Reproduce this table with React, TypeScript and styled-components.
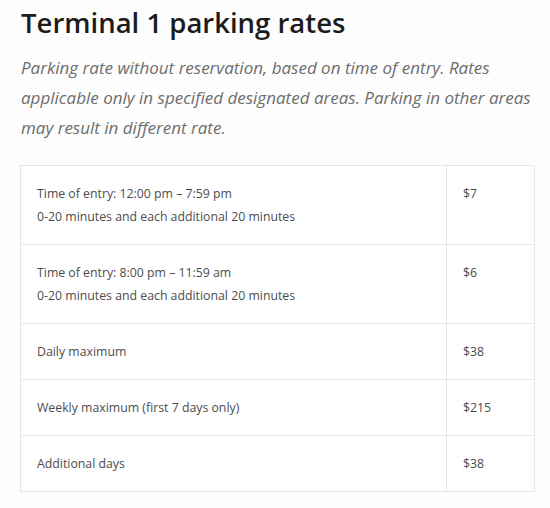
import React from "react";
import styled, { createGlobalStyle } from "styled-components";

const Global = createGlobalStyle`
  html, body { margin: 0; padding: 0; background: #fdfdfd; }
  body { font-family: "Open Sans", "Noto Sans", sans-serif; }
`;

const Page = styled.div`
  padding: 5px 15px 0 20px;
`;

const Title = styled.h1`
  margin: 0;
  font-family: "Open Sans", sans-serif;
  font-weight: 600;
  font-size: 27.5px;
  line-height: 36px;
  color: #1c1c1c;
  padding-left: 1px;
`;

const Lead = styled.p`
  margin: 12px 0 0;
  padding-left: 1px;
  font-family: "Open Sans", sans-serif;
  font-style: italic;
  font-size: 17px;
  line-height: 30px;
  color: #6d6d6d;
`;

const Table = styled.table`
  margin-top: 22px;
  width: 100%;
  border-collapse: collapse;
  background: #fff;
  border: 1px solid #e6e6e6;
`;

const Row = styled.tr`
  border-bottom: 1px solid #e6e6e6;
`;

const Cell = styled.td<{ $price?: boolean }>`
  padding: 16px;
  vertical-align: top;
  font-family: "Open Sans", sans-serif;
  font-size: 12.3px;
  line-height: 23px;
  color: #4d4d4d;
  width: ${(p) => (p.$price ? "55px" : "auto")};
  border-left: ${(p) => (p.$price ? "1px solid #e6e6e6" : "none")};
`;

const Line = styled.div``;

const rates: { lines: string[]; price: string }[] = [
  {
    lines: ["Time of entry: 12:00 pm – 7:59 pm", "0-20 minutes and each additional 20 minutes"],
    price: "$7",
  },
  {
    lines: ["Time of entry: 8:00 pm – 11:59 am", "0-20 minutes and each additional 20 minutes"],
    price: "$6",
  },
  { lines: ["Daily maximum"], price: "$38" },
  { lines: ["Weekly maximum (first 7 days only)"], price: "$215" },
  { lines: ["Additional days"], price: "$38" },
];

export default function App() {
  return (
    <Page>
      <Global />
      <Title>Terminal 1 parking rates</Title>
      <Lead>
        Parking rate without reservation, based on time of entry. Rates applicable only in specified
        designated areas. Parking in other areas may result in different rate.
      </Lead>
      <Table>
        <tbody>
          {rates.map((r, i) => (
            <Row key={i}>
              <Cell>
                {r.lines.map((l, j) => (
                  <Line key={j}>{l}</Line>
                ))}
              </Cell>
              <Cell $price>{r.price}</Cell>
            </Row>
          ))}
        </tbody>
      </Table>
    </Page>
  );
}
